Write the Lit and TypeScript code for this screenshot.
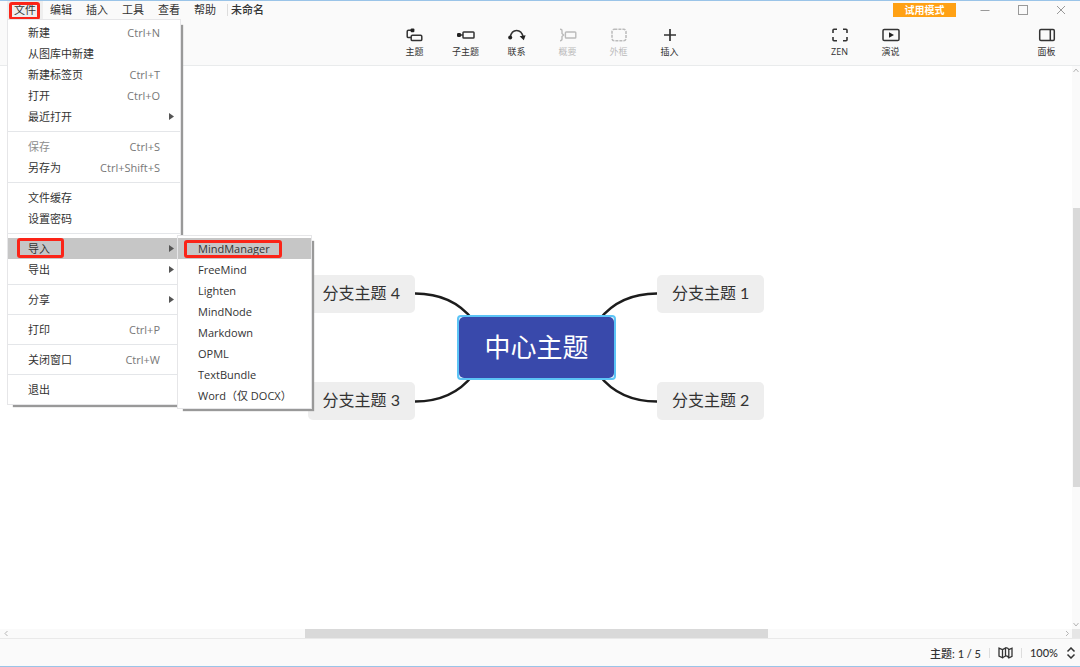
import { LitElement, html, svg, css, nothing } from "lit";
import { customElement, property } from "lit/decorators.js";
import { classMap } from "lit/directives/class-map.js";

const resetButton = css`
  * {
    box-sizing: border-box;
  }
  button {
    margin: 0;
    padding: 0;
    border: 0;
    background: none;
    color: inherit;
    font: inherit;
    text-align: left;
    white-space: nowrap;
  }
`;

interface MenuEntry {
  label: string;
  keys?: string;
  disabled?: boolean;
  marked?: boolean;
  children?: MenuEntry[];
  arrow?: boolean;
}

const importFormats: MenuEntry[] = [
  { label: "MindManager", marked: true },
  { label: "FreeMind" },
  { label: "Lighten" },
  { label: "MindNode" },
  { label: "Markdown" },
  { label: "OPML" },
  { label: "TextBundle" },
  { label: "Word（仅 DOCX）" },
];

const fileMenu: MenuEntry[][] = [
  [
    { label: "新建", keys: "Ctrl+N" },
    { label: "从图库中新建" },
    { label: "新建标签页", keys: "Ctrl+T" },
    { label: "打开", keys: "Ctrl+O" },
    { label: "最近打开", arrow: true },
  ],
  [
    { label: "保存", keys: "Ctrl+S", disabled: true },
    { label: "另存为", keys: "Ctrl+Shift+S" },
  ],
  [{ label: "文件缓存" }, { label: "设置密码" }],
  [
    { label: "导入", arrow: true, marked: true, children: importFormats },
    { label: "导出", arrow: true },
  ],
  [{ label: "分享", arrow: true }],
  [{ label: "打印", keys: "Ctrl+P" }],
  [{ label: "关闭窗口", keys: "Ctrl+W" }],
  [{ label: "退出" }],
];

@customElement("file-menu")
export class FileMenu extends LitElement {
  @property({ attribute: false }) groups: MenuEntry[][] = [];

  static styles = [
    resetButton,
    css`
      :host {
        display: block;
        font-size: 11px;
        line-height: 21px;
        color: #333;
      }
      .panel {
        background: #fff;
        border: 1px solid #e6e6e8;
        padding: 2px 0;
        box-shadow: 4px 4px 1px -2px #999;
      }
      .main {
        width: 174px;
        padding-bottom: 4px;
      }
      .sub {
        position: absolute;
        left: 169px;
        top: -3px;
        width: 135px;
      }
      .line {
        height: 1px;
        margin: 4px 0;
        background: #e4e6e9;
      }
      .item {
        position: relative;
      }
      .row {
        position: relative;
        display: flex;
        align-items: center;
        justify-content: space-between;
        width: 100%;
        height: 21px;
        padding: 0 20px;
      }
      .row.active {
        background: #c6c6c6;
      }
      .row:disabled {
        color: #8d8d8d;
      }
      .keys {
        color: #777;
      }
      .row.arrow {
        padding-right: 6px;
      }
      .arrow-icon {
        width: 5px;
        height: 7px;
        fill: #555;
      }
      .mark {
        position: absolute;
        left: 9px;
        top: 0;
        width: 47px;
        height: 20px;
        border: 3px solid #fb2418;
        border-radius: 3px;
      }
      .sub .mark {
        left: 6px;
        top: 2px;
        width: 98px;
        height: 18px;
      }
    `,
  ];

  private row(e: MenuEntry): unknown {
    return html`<div class="item">
      <button
        class=${classMap({ row: true, active: !!e.marked, arrow: !!e.arrow })}
        role="menuitem"
        ?disabled=${e.disabled}
      >
        <span>${e.label}</span>
        ${e.keys ? html`<span class="keys">${e.keys}</span>` : nothing}
        ${e.arrow
          ? html`<svg class="arrow-icon" viewBox="0 0 5 7"><path d="M0 0L5 3.5L0 7Z" /></svg>`
          : nothing}
        ${e.marked ? html`<span class="mark"></span>` : nothing}
      </button>
      ${e.children
        ? html`<div class="panel sub" role="menu">${e.children.map((c) => this.row(c))}</div>`
        : nothing}
    </div>`;
  }

  render() {
    return html`<div class="panel main" role="menu">
      ${this.groups.map(
        (g, i) => html`${i ? html`<div class="line"></div>` : nothing}${g.map((e) => this.row(e))}`
      )}
    </div>`;
  }
}

const icons = {
  topic: svg`<g fill="none" stroke="#333" stroke-width="1.5"><rect x="5.2" y="7.2" width="10.6" height="5.4" rx="1.2"/><path d="M6 2.2H2.4Q1.2 2.2 1.2 3.4V8.4Q1.2 9.6 2.4 9.6H5"/></g><rect x="4.6" y="0.6" width="3.8" height="3.6" rx="1" fill="#222"/>`,
  subtopic: svg`<g fill="none" stroke="#333" stroke-width="1.5"><rect x="6" y="4" width="11" height="6" rx="0.8"/><path d="M3 7H6"/></g><rect x="0" y="5" width="4" height="4" rx="1.2" fill="#222"/>`,
  relation: svg`<path d="M2.2 9C4 .2 13.2 .2 15.2 9" fill="none" stroke="#333" stroke-width="1.5"/><circle cx="2.2" cy="9.4" r="2" fill="#222"/><path d="M11.6 8.2L17.6 7.2L15.8 12.2Z" fill="#222"/>`,
  summary: svg`<g fill="none" stroke="#bbb" stroke-width="1.4"><path d="M1 1.3Q3 1.3 3 3V5.5L4.6 7L3 8.5V11Q3 12.7 1 12.7"/><rect x="6.4" y="4" width="10.4" height="6" rx="0.8"/></g>`,
  boundary: svg`<rect x="2" y="1.2" width="14" height="11.6" rx="2.4" fill="none" stroke="#bbb" stroke-width="1.5" stroke-dasharray="3 1"/>`,
  insert: svg`<path d="M9 1V13M3 7H15" fill="none" stroke="#333" stroke-width="1.7"/>`,
  zen: svg`<path d="M2 5V2.3Q2 1.3 3 1.3H6M12 1.3H15Q16 1.3 16 2.3V5M16 9V11.7Q16 12.7 15 12.7H12M6 12.7H3Q2 12.7 2 11.7V9" fill="none" stroke="#333" stroke-width="1.6"/>`,
  play: svg`<rect x="1" y="1.5" width="16" height="11" rx="1.3" fill="none" stroke="#333" stroke-width="1.5"/><path d="M7 4.2L12 7L7 9.8Z" fill="#222"/>`,
  panel: svg`<rect x="1.7" y="1.5" width="14.6" height="11" rx="1.2" fill="none" stroke="#333" stroke-width="1.5"/><path d="M12.3 1.5V12.5" stroke="#333" stroke-width="1.5"/>`,
};

interface Tool {
  label: string;
  icon: keyof typeof icons;
  disabled?: boolean;
}

const editTools: Tool[] = [
  { label: "主题", icon: "topic" },
  { label: "子主题", icon: "subtopic" },
  { label: "联系", icon: "relation" },
  { label: "概要", icon: "summary", disabled: true },
  { label: "外框", icon: "boundary", disabled: true },
  { label: "插入", icon: "insert" },
];
const viewTools: Tool[] = [
  { label: "ZEN", icon: "zen" },
  { label: "演说", icon: "play" },
];
const panelTools: Tool[] = [{ label: "面板", icon: "panel" }];

@customElement("mind-map")
export class MindMap extends LitElement {
  static styles = [
    resetButton,
    css`
      :host {
        display: grid;
        place-items: center;
        overflow: hidden;
      }
      .stage {
        position: relative;
        width: 458px;
        height: 145px;
      }
      .links {
        position: absolute;
        inset: 0;
        fill: none;
        stroke: #1c1c1c;
        stroke-width: 2.4;
      }
      .node {
        position: absolute;
        height: 38px;
        padding: 0 15px;
        border-radius: 5px;
        background: #eee;
        color: #333;
        font-family: Lato, "Noto Sans CJK SC", sans-serif;
        font-size: 16px;
        line-height: 36px;
      }
      .text {
        display: block;
        height: 38px;
      }
      .left {
        right: 350px;
      }
      .right {
        left: 350px;
      }
      .top {
        top: 0;
      }
      .bottom {
        bottom: 0;
      }
      .root {
        position: absolute;
        left: 150px;
        top: 40px;
        width: 159px;
        height: 65px;
        border: 2px solid #5cc4f6;
        border-radius: 4px;
        background: #e4f3fd;
      }
      .root-text {
        display: block;
        height: 100%;
        border-radius: 5px;
        background: #3949ab;
        color: #fff;
        font-size: 26px;
        line-height: 60px;
        text-align: center;
      }
    `,
  ];

  render() {
    return html`<div class="stage">
      <svg class="links" viewBox="0 0 458 145" width="458" height="145">
        <path d="M108 18.5C134 18.5 152 27 166 45" />
        <path d="M350 18.5C324 18.5 306 27 292 45" />
        <path d="M108 126.5C134 126.5 152 118 166 100" />
        <path d="M350 126.5C324 126.5 306 118 292 100" />
      </svg>
      <button class="node right top"><span class="text">分支主题 1</span></button>
      <button class="node right bottom"><span class="text">分支主题 2</span></button>
      <button class="node left bottom"><span class="text">分支主题 3</span></button>
      <button class="node left top"><span class="text">分支主题 4</span></button>
      <button class="root"><span class="root-text">中心主题</span></button>
    </div>`;
  }
}

@customElement("app-root")
export class AppRoot extends LitElement {
  static styles = [
    resetButton,
    css`
      :host {
        display: grid;
        grid-template-rows: auto 1fr auto auto;
        min-height: 100vh;
        box-sizing: border-box;
        border-top: 1px solid #9ac4e8;
        border-bottom: 1px solid #9ac4e8;
        background: #fff;
        color: #333;
        font-family: "Open Sans", "Noto Sans CJK SC", sans-serif;
        font-size: 11px;
      }
      .header {
        background: #fafafa;
        border-bottom: 1px solid #e9ebec;
      }
      .titlebar {
        display: flex;
        align-items: center;
        height: 18px;
        padding-left: 7px;
      }
      .menubar {
        display: flex;
      }
      .entry {
        position: relative;
      }
      .menu-button {
        height: 18px;
        padding: 0 7px;
        line-height: 18px;
      }
      .menu-button.open {
        background: #eee;
      }
      .mark {
        position: absolute;
        left: 2px;
        top: 1px;
        width: 31px;
        height: 18px;
        border: 3px solid #fb2418;
        border-radius: 3px;
        pointer-events: none;
      }
      .dropdown {
        position: absolute;
        left: 0;
        top: 18px;
        z-index: 2;
      }
      .doc {
        margin-left: 4px;
        padding-left: 3px;
        border-left: 1px solid #ddd;
        line-height: 12px;
        font-weight: 500;
      }
      .badge {
        margin-left: auto;
        margin-right: 10px;
        width: 63px;
        height: 14px;
        background: #ffa114;
        color: #fff;
        font-size: 10px;
        font-weight: 700;
        line-height: 14px;
        text-align: center;
      }
      .window {
        display: grid;
        place-items: center;
        width: 38px;
        height: 18px;
        fill: none;
        stroke: #999;
      }
      .toolbar {
        display: grid;
        grid-template-columns: 1fr auto 1fr;
        height: 46px;
        padding: 0 8px 0 12px;
      }
      .edit {
        grid-column: 2;
        display: flex;
      }
      .view {
        display: flex;
        justify-content: flex-end;
      }
      .view-pair {
        display: flex;
        margin-right: 105px;
      }
      .tool {
        display: flex;
        flex-direction: column;
        align-items: center;
        justify-content: flex-start;
        gap: 4px;
        width: 51px;
        height: 42px;
        padding-top: 9px;
        font-size: 9px;
        line-height: 12px;
      }
      .tool:disabled {
        color: #bbb;
      }
      .body {
        display: grid;
        grid-template-columns: 1fr 8px;
      }
      .bar {
        display: flex;
        align-items: center;
        justify-content: space-between;
        background: #fafafa;
        fill: none;
        stroke: #b5b5b5;
      }
      .vertical {
        flex-direction: column;
        padding: 2px 0;
      }
      .vertical .thumb {
        width: 7px;
        height: 50%;
        margin-left: 1px;
      }
      .horizontal {
        height: 10px;
        padding-left: 3px;
        border-bottom: 1px solid #e9e9e9;
      }
      .horizontal .thumb {
        width: 43%;
        height: 9px;
      }
      .thumb {
        background: #d9d9d9;
      }
      .end {
        display: flex;
        align-items: center;
        gap: 2px;
      }
      .corner {
        width: 8px;
        height: 9px;
        background: #e6e6e6;
      }
      .status {
        display: flex;
        align-items: center;
        justify-content: flex-end;
        gap: 8px;
        height: 27px;
        padding-right: 4px;
        background: #fafafa;
        font-family: Lato, "Noto Sans CJK SC", sans-serif;
        font-weight: 500;
      }
      .split {
        width: 1px;
        height: 10px;
        background: #ddd;
      }
      .icon {
        display: block;
        fill: none;
        stroke: #333;
      }
      .zoom {
        display: flex;
        align-items: center;
        gap: 8px;
      }
    `,
  ];

  private tool(t: Tool) {
    return html`<button class="tool" ?disabled=${t.disabled}>
      <svg width="18" height="14" viewBox="0 0 18 14" aria-hidden="true">${icons[t.icon]}</svg>
      <span>${t.label}</span>
    </button>`;
  }

  render() {
    return html`
      <header class="header">
        <div class="titlebar">
          <nav class="menubar">
            <div class="entry">
              <button class="menu-button open" aria-expanded="true">文件</button>
              <file-menu class="dropdown" .groups=${fileMenu}></file-menu>
              <span class="mark"></span>
            </div>
            ${["编辑", "插入", "工具", "查看", "帮助"].map(
              (label) => html`<button class="menu-button">${label}</button>`
            )}
          </nav>
          <span class="doc">未命名</span>
          <span class="badge">试用模式</span>
          <button class="window" aria-label="最小化">
            <svg width="10" height="10"><path d="M0.5 5.5H9.5" /></svg>
          </button>
          <button class="window" aria-label="最大化">
            <svg width="10" height="10"><rect x="0.5" y="0.5" width="9" height="9" /></svg>
          </button>
          <button class="window" aria-label="关闭">
            <svg width="10" height="10"><path d="M1 1L9 9M9 1L1 9" /></svg>
          </button>
        </div>
        <div class="toolbar">
          <div class="edit">${editTools.map((t) => this.tool(t))}</div>
          <div class="view">
            <div class="view-pair">${viewTools.map((t) => this.tool(t))}</div>
            ${panelTools.map((t) => this.tool(t))}
          </div>
        </div>
      </header>
      <main class="body">
        <mind-map></mind-map>
        <div class="bar vertical">
          <svg width="6" height="5"><path d="M0.5 4L3 1L5.5 4" /></svg>
          <div class="thumb"></div>
          <svg width="6" height="5"><path d="M0.5 1L3 4L5.5 1" /></svg>
        </div>
      </main>
      <div class="bar horizontal">
        <svg width="6" height="7"><path d="M4.5 1L2 3.5L4.5 6" /></svg>
        <div class="thumb"></div>
        <div class="end">
          <svg width="6" height="7"><path d="M2 1L4.5 3.5L2 6" /></svg>
          <div class="corner"></div>
        </div>
      </div>
      <footer class="status">
        <span>主题: 1 / 5</span>
        <span class="split"></span>
        <svg class="icon" width="15" height="12" viewBox="0 0 15 12" stroke-width="1.3">
          <path d="M1 1.2L4.5 2.6V10.8L1 9.2ZM4.5 2.6L7.5 1V9L4.5 10.8M7.5 1.2Q9.5 0.2 10.8 2.6V11M7.5 9Q9.5 8.5 10.8 11L14 9.4V1.2L10.8 2.6" />
        </svg>
        <span class="split"></span>
        <button class="zoom">
          100%
          <svg class="icon" width="10" height="12" viewBox="0 0 10 12" stroke-width="1.5">
            <path d="M1.5 4.5L5 1L8.5 4.5M1.5 7.5L5 11L8.5 7.5" />
          </svg>
        </button>
      </footer>
    `;
  }
}
